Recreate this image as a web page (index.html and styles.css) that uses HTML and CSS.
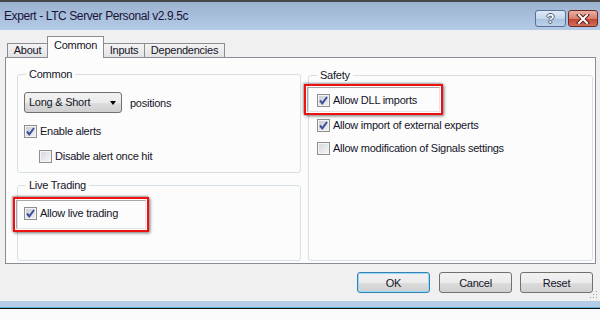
FILE: index.html
```html
<!DOCTYPE html>
<html lang="en">
<head>
  <meta charset="UTF-8">
  <title>Expert - LTC Server Personal v2.9.5c</title>
  <link rel="stylesheet" href="styles.css">
</head>
<body>
  <div class="window">
    <div class="titlebar">
      <span class="title">Expert - LTC Server Personal v2.9.5c</span>
      <div class="caption">
        <span class="cap help">?</span>
        <span class="cap close">
          <svg width="14" height="10" viewBox="0 0 14 10">
            <path d="M3 1 L11 9 M11 1 L3 9" stroke="#5a1e18" stroke-width="4" stroke-linecap="square"/>
            <path d="M3 1 L11 9 M11 1 L3 9" stroke="#fff" stroke-width="2" stroke-linecap="square"/>
          </svg>
        </span>
      </div>
    </div>

    <div class="client">
      <div class="tabs">
        <span class="tab t-about">About</span>
        <span class="tab t-common active">Common</span>
        <span class="tab t-inputs">Inputs</span>
        <span class="tab t-deps">Dependencies</span>
      </div>

      <div class="panel">
        <div class="col">
          <div class="group g-common">
            <div class="group-title">Common</div>
            <div class="row">
              <div class="select">Long &amp; Short<span class="arrow"></span></div>
              <span class="after">positions</span>
            </div>
            <label class="check c-alerts"><span class="box on"></span>Enable alerts</label>
            <label class="check c-disable"><span class="box"></span>Disable alert once hit</label>
          </div>
          <div class="group g-live">
            <div class="group-title">Live Trading</div>
            <label class="check c-live"><span class="box on"></span>Allow live trading<span class="mark m-live"></span></label>
          </div>
        </div>
        <div class="col">
          <div class="group g-safety">
            <div class="group-title">Safety</div>
            <label class="check c-dll"><span class="box on"></span>Allow DLL imports<span class="mark m-dll"></span></label>
            <label class="check c-ext"><span class="box on"></span>Allow import of external experts</label>
            <label class="check c-sig"><span class="box"></span>Allow modification of Signals settings</label>
          </div>
        </div>
      </div>

      <div class="buttons">
        <button class="btn default">OK</button>
        <button class="btn">Cancel</button>
        <button class="btn">Reset</button>
      </div>
      <svg class="grip" width="9" height="9" viewBox="0 0 9 9">
        <rect x="7" y="1" width="1" height="1" fill="#a0a0a0"/>
        <rect x="4" y="4" width="1" height="1" fill="#a0a0a0"/>
        <rect x="7" y="4" width="1" height="1" fill="#a0a0a0"/>
        <rect x="1" y="7" width="1" height="1" fill="#a0a0a0"/>
        <rect x="4" y="7" width="1" height="1" fill="#a0a0a0"/>
        <rect x="7" y="7" width="1" height="1" fill="#a0a0a0"/>
      </svg>
    </div>
    <div class="frame-bottom"></div>
  </div>
</body>
</html>
```

FILE: styles.css
```css
body { margin:0; background:#fafafa; font-family:"Liberation Sans", Arial, sans-serif; font-size:11px; letter-spacing:-0.25px; color:#141428; }
.window { width:600px; height:320px; overflow:hidden; }

/* title bar */
.titlebar { height:28px; border-top:2px solid #474747; background:linear-gradient(#9cb3d0, #b3cbe7); display:flex; justify-content:space-between; }
.title { font-size:12px; letter-spacing:-0.4px; line-height:28px; padding-left:4px; color:#1b1238; }
.caption { display:flex; gap:2px; padding-top:8px; padding-right:2px; }
.cap { height:15px; border:1px solid #5d6f96; border-radius:3px; display:flex; align-items:center; justify-content:center; letter-spacing:0; }
.help { width:29px; background:linear-gradient(#dfe9f6 0%, #c4d6ec 50%, #a9c1de 51%, #bcd2ea 100%); color:#fff; font-weight:bold; font-size:13px; text-shadow:-1px 0 #4c5a78, 1px 0 #4c5a78, 0 -1px #4c5a78, 0 1px #4c5a78; }
.close { width:28px; border-color:#6b2a22; background:linear-gradient(#eab1a6 0%, #d8806f 50%, #c2402e 51%, #d0705c 100%); }

/* client area */
.client { position:relative; height:271px; background:#f0f0f0; padding-top:7px; box-sizing:border-box; }
.tabs { height:20px; display:flex; align-items:flex-end; padding-left:7px; }
.tab { height:13px; line-height:13px; border:1px solid #898c95; border-bottom:none; background:linear-gradient(#f3f3f3, #e3e3e3); text-align:center; margin-left:-1px; }
.t-about { width:39px; margin-left:0; }
.t-common { width:55px; }
.t-inputs { width:40px; }
.t-deps { width:79px; }
.tab.active { position:relative; z-index:1; height:21px; line-height:17px; background:#fcfcfc; margin-bottom:-1px; }

.panel { margin-left:5px; width:591px; height:207px; box-sizing:border-box; border:1px solid #898c95; background:#fcfcfc; padding:16px 0 0 11px; display:grid; grid-template-columns:284px 285px; column-gap:7px; align-items:start; }
.col { display:flex; flex-direction:column; }

.group { border:1px solid #d5dfe5; border-radius:3px; box-sizing:border-box; padding:0 6px; }
.group-title { width:fit-content; margin:-7px 0 0 2px; padding:0 3px; line-height:13px; background:#fcfcfc; }
.g-common { height:99px; }
.g-live { height:76px; margin-top:12px; }
.g-safety { height:186px; margin-top:1px; padding-left:8px; }
.g-safety .group-title { margin-left:0; }

.row { display:flex; align-items:center; margin-top:11px; }
.select { position:relative; width:98px; height:21px; box-sizing:border-box; border:1px solid #707070; border-radius:3px; background:linear-gradient(#f2f2f2 0%, #ebebeb 50%, #dddddd 51%, #cfcfcf 100%); line-height:19px; padding-left:4px; }
.arrow { position:absolute; right:5px; top:8px; border-left:3.5px solid transparent; border-right:3.5px solid transparent; border-top:4px solid #000; }
.after { margin-left:8px; }

.check { position:relative; display:flex; align-items:center; height:13px; line-height:13px; }
.box { width:13px; height:13px; box-sizing:border-box; border:1px solid #8e8f8f; background:linear-gradient(135deg, #d4d7dc, #f7f7f7); box-shadow:inset 0 0 0 1px #f4f4f4; margin-right:3px; }
.box.on { background:url("data:image/svg+xml,%3Csvg xmlns='http://www.w3.org/2000/svg' width='11' height='11'%3E%3Cpath d='M2 5.5 L4.3 8.3 L9 2' fill='none' stroke='%233b4f9a' stroke-width='2'/%3E%3C/svg%3E") center no-repeat, linear-gradient(135deg, #c6cad2, #f2f2f4); }
.c-alerts { margin-top:12px; }
.c-disable { margin-top:12px; margin-left:15px; }
.c-live { margin-top:15px; }
.c-dll { margin-top:12px; }
.c-ext { margin-top:12px; }
.c-sig { margin-top:10px; }

/* red annotation frames */
.mark { position:absolute; top:-10px; border:2px solid #ee1111; box-shadow:1px 1px 3px rgba(0,0,0,0.55), -1px -1px 2px rgba(0,0,0,0.3); padding:1px; box-sizing:border-box; }
.mark::before { content:""; display:block; height:100%; box-sizing:border-box; border:1px solid #a8a8a8; border-right-color:#e4e4e4; border-bottom-color:#e4e4e4; }
.m-dll { left:-13px; width:139px; height:31px; }
.m-live { left:-11px; width:136px; height:35px; }

/* dialog buttons */
.buttons { display:flex; justify-content:flex-end; gap:8px; padding-right:7px; margin-top:8px; }
.btn { width:73px; height:21px; border:1px solid #707070; border-radius:3px; background:linear-gradient(#f2f2f2 0%, #ebebeb 50%, #dddddd 51%, #cfcfcf 100%); font-family:"Liberation Sans", Arial, sans-serif; font-size:11px; letter-spacing:-0.25px; color:#141428; padding:0; }
.btn.default { border-color:#3c7fb1; box-shadow:inset 0 0 0 1px #8fdcf6; margin-right:1px; }
.grip { position:absolute; right:2px; bottom:2px; }

.frame-bottom { height:6px; background:#b4cce8; border-bottom:1px solid #5cb6d6; box-shadow:0 1px 0 #111; }
```
